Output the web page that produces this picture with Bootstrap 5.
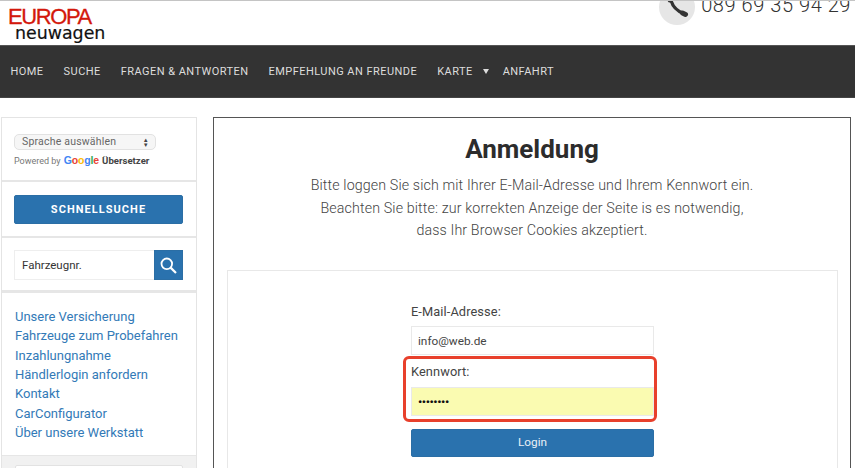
<!DOCTYPE html>
<html lang="de">
<head>
    <meta charset="UTF-8">
    <meta name="viewport" content="width=device-width, initial-scale=1.0">
    <title>Anmeldung</title>
    <link rel="stylesheet" href="https://cdn.jsdelivr.net/npm/bootstrap@5.3.0/dist/css/bootstrap.min.css">
    <style>
        html, body { height: 468px; overflow: hidden; }
        body { font-family: Roboto, "Liberation Sans", sans-serif; color: #333; background: #fff; }

        .site-top { height: 45px; border-top: 1px solid #c4c4c4; overflow: hidden; padding-left: 8px; }
        .logo-box { width: 110px; line-height: 1; }
        .logo-red { font-family: "Liberation Sans", sans-serif; color: #d3180c; font-size: 22px; line-height: 18px; margin-top: 7px; letter-spacing: -1.4px; -webkit-text-stroke: .3px #d3180c; }
        .logo-black { font-family: "DejaVu Sans", sans-serif; color: #111; font-size: 17.4px; line-height: 15px; margin-left: 7px; -webkit-text-stroke: .2px #111; }
        .phone-box { margin-top: -12px; margin-right: 4px; height: 36px; align-self: flex-start; }
        .phone-circle { width: 36px; height: 36px; background: #e6e6e6; }
        .phone-num { font-size: 20px; font-weight: 300; letter-spacing: .55px; color: #333; margin-left: 6px; margin-top: -5px; }

        .main-nav { height: 53px; background: #333; border-top: 1px solid #555; border-bottom: 1px solid #444; padding: 1px 0 0 10.5px; gap: 20px; }
        .main-nav a { color: #ddd; font-size: 11px; letter-spacing: .45px; text-decoration: none; }
        .nav-caret { display: inline-block; margin: 0 -6px 0 10px; border-left: 3.5px solid transparent; border-right: 3.5px solid transparent; border-top: 5px solid #ddd; vertical-align: 1px; }

        .page-body { padding: 19px 0 0 1px; gap: 16px; }
        .side-col { width: 196px; flex: none; border: 1px solid #e4e4e4; border-bottom: 0; }
        .side-part { padding: 0 13px 0 12px; border-bottom: 2px solid #e6e6e6; }
        .lang-part { height: 64px; padding-top: 16px; }
        .lang-select { width: 142px; height: 16px; background: #f6f6f6; border: 1px solid #e2e2e2; border-radius: 5px; font-size: 10.5px; color: #666; padding: 0 6px 0 7px; letter-spacing: .2px; }
        .lang-arrows { font-size: 6px; line-height: 5px; color: #444; }
        .powered { font-size: 9px; color: #777; margin-top: 4px; line-height: 12px; }
        .g-word { font-family: "Liberation Sans", sans-serif; font-size: 10.5px; font-weight: 700; margin: 0 1px; letter-spacing: -.2px; }
        .g-blue { color: #4285f4; } .g-red { color: #ea4335; } .g-yellow { color: #fbbc05; } .g-green { color: #34a853; }
        .powered b { color: #444; font-weight: 700; font-size: 9.6px; }
        .quick-part { height: 56px; padding-top: 13px; }
        .quick-btn { background: #2a72ae; border: 1px solid #2b6ea5; color: #fff; font-size: 11px; font-weight: 700; letter-spacing: 1.05px; border-radius: 2px; height: 29px; line-height: 27px; padding: 0; }
        .search-part { height: 55px; padding-top: 12px; border-bottom-width: 3px; }
        .fz-input { width: 140px; height: 30px; border: 1px solid #eee; border-right: 0; font-size: 11.5px; color: #333; padding: 0 7px; line-height: 28px; }
        .fz-btn { width: 29px; height: 30px; background: #2a72ae; border: 1px solid #2b6ea5; }
        .link-part { height: 163px; padding: 14px 13px 0 13px; border-bottom-width: 1px; }
        .link-part a { display: block; color: #337ab7; font-size: 13px; line-height: 19.35px; text-decoration: none; }
        .grey-part { height: 20px; background: #f1f1f1; padding: 9px 13px 0; }
        .grey-input { height: 14px; background: #fff; border: 1px solid #e2e2e2; border-radius: 2px; }

        .login-box { width: 638px; flex: none; border: 1px solid #555; border-bottom: 0; padding: 0 13px; text-align: center; }
        .login-title { font-size: 26px; font-weight: 700; color: #2c2c2c; margin: 15px 0 9px; line-height: 32px; }
        .login-text { font-size: 14.25px; font-weight: 300; color: #444; line-height: 22.7px; margin-bottom: 0; letter-spacing: .12px; }
        .login-inner { margin-top: 28px; width: 611px; height: 220px; border: 1px solid #e8e8e8; border-bottom: 0; padding: 33px 0 0 183px; text-align: left; }
        .field-wrap { width: 243px; }
        .login-label { font-size: 12.8px; color: #444; line-height: 16px; margin-bottom: 6px; letter-spacing: .1px; display: block; }
        .login-input { height: 29px; border: 1px solid #e9e9e9; border-radius: 0; font-size: 11.8px; color: #444; padding: 0 6px; box-shadow: none; }
        .mark-box { margin: 1px -3px 0 -8px; padding: 6px 2px 6px 5px; border: 3px solid #e8402c; border-radius: 6px; width: 254px; height: 66px; }
        .mark-box .login-label { margin-bottom: 7px; margin-top: -1px; }
        .pw-input { background: #fafbb1; color: #111; font-size: 11.8px; font-weight: 700; letter-spacing: -.4px; height: 29px; width: 243px; }
        .login-btn { margin-top: 7px; height: 28px; background: #2a72ae; border: 1px solid #2b6ea5; color: #e8f0f6; font-size: 11.8px; border-radius: 2px; padding: 0; }
    </style>
</head>
<body>
    <header class="site-top d-flex justify-content-between">
        <div class="logo-box">
            <div class="logo-red">EUROPA</div>
            <div class="logo-black">neuwagen</div>
        </div>
        <div class="phone-box d-flex align-items-center">
            <div class="phone-circle rounded-circle d-flex align-items-center justify-content-center">
                <svg width="24" height="24" viewBox="0 0 24 24"><path fill="none" stroke="#333" stroke-width="3.200" stroke-linecap="round" d="M5.500 3C6.500 9.500 11 15.500 18.500 18.500"/><path fill="none" stroke="#333" stroke-width="5" stroke-linecap="round" d="M4 2.500l1 2.500M17.500 18l3 1.500"/></svg>
            </div>
            <div class="phone-num">089 69 35 94 29</div>
        </div>
    </header>

    <nav class="main-nav d-flex align-items-center">
        <a href="#">HOME</a>
        <a href="#">SUCHE</a>
        <a href="#">FRAGEN &amp; ANTWORTEN</a>
        <a href="#">EMPFEHLUNG AN FREUNDE</a>
        <a href="#">KARTE<span class="nav-caret"></span></a>
        <a href="#">ANFAHRT</a>
    </nav>

    <div class="page-body d-flex">
        <aside class="side-col">
            <div class="side-part lang-part">
                <div class="lang-select d-flex justify-content-between align-items-center">
                    <span>Sprache auswählen</span>
                    <span class="lang-arrows text-center">▲<br>▼</span>
                </div>
                <div class="powered">Powered by <span class="g-word"><span class="g-blue">G</span><span class="g-red">o</span><span class="g-yellow">o</span><span class="g-blue">g</span><span class="g-green">l</span><span class="g-red">e</span></span> <b>Übersetzer</b></div>
            </div>
            <div class="side-part quick-part">
                <button class="btn quick-btn w-100" type="button">SCHNELLSUCHE</button>
            </div>
            <div class="side-part search-part d-flex align-items-start">
                <div class="fz-input">Fahrzeugnr.</div>
                <div class="fz-btn d-flex align-items-center justify-content-center">
                    <svg width="19" height="19" viewBox="0 0 19 19" fill="none" stroke="#fff" stroke-width="1.800"><circle cx="7.800" cy="7.800" r="5.300"/><path d="M11.600 11.600l5.400 5.400" stroke-width="2.200"/></svg>
                </div>
            </div>
            <div class="side-part link-part">
                <a href="#">Unsere Versicherung</a>
                <a href="#">Fahrzeuge zum Probefahren</a>
                <a href="#">Inzahlungnahme</a>
                <a href="#">Händlerlogin anfordern</a>
                <a href="#">Kontakt</a>
                <a href="#">CarConfigurator</a>
                <a href="#">Über unsere Werkstatt</a>
            </div>
            <div class="grey-part"><div class="grey-input"></div></div>
        </aside>

        <main class="login-box">
            <h1 class="login-title">Anmeldung</h1>
            <p class="login-text">Bitte loggen Sie sich mit Ihrer E-Mail-Adresse und Ihrem Kennwort ein.<br>Beachten Sie bitte: zur korrekten Anzeige der Seite is es notwendig,<br>dass Ihr Browser Cookies akzeptiert.</p>
            <div class="login-inner">
                <div class="field-wrap">
                    <label class="login-label" for="mail">E-Mail-Adresse:</label>
                    <input class="form-control login-input" id="mail" type="text" value="info@web.de">
                    <div class="mark-box">
                        <label class="login-label" for="pw">Kennwort:</label>
                        <input class="form-control login-input pw-input" id="pw" type="text" value="••••••••">
                    </div>
                    <button class="btn login-btn w-100" type="button">Login</button>
                </div>
            </div>
        </main>
    </div>

    <script src="https://cdn.jsdelivr.net/npm/bootstrap@5.3.0/dist/js/bootstrap.bundle.min.js"></script>
</body>
</html>
